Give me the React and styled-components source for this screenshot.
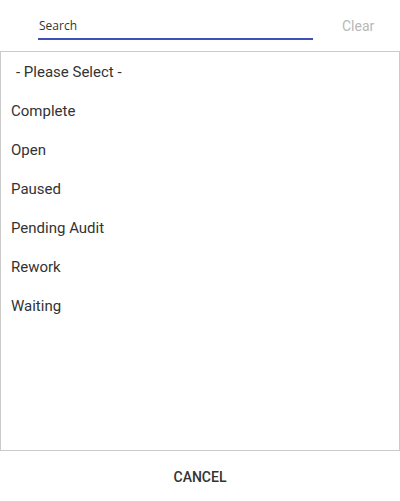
import React from 'react';
import styled, { createGlobalStyle } from 'styled-components';

const GlobalStyle = createGlobalStyle`
body {
  margin: 0;
  background: #fff;
  font-family: Roboto, 'Liberation Sans', sans-serif;
}`;

const options = ['Complete', 'Open', 'Paused', 'Pending Audit', 'Rework', 'Waiting'];

const Panel = styled.div`
width: 400px;
height: 501px;
display: flex;
flex-direction: column;`;

const SearchBar = styled.div`
height: 51px;
display: flex;
align-items: flex-start;
padding-left: 38px;
box-sizing: border-box;`;

const SearchField = styled.div`
width: 275px;
height: 40px;
box-sizing: border-box;
border-bottom: 2px solid #3f51b5;
display: flex;
align-items: flex-end;
padding: 0 0 4px 1px;`;

const SearchInput = styled.input`
border: none;
outline: none;
padding: 0;
width: 100%;
font-family: 'Open Sans', 'Noto Sans', sans-serif;
font-size: 12px;
color: #333;
&::placeholder {
  color: #333;
}`;

const ClearButton = styled.button`
margin: 18px 0 0 29px;
border: none;
background: none;
padding: 0;
font-family: Roboto, sans-serif;
font-size: 14px;
color: #b8b8b8;
cursor: pointer;`;

const List = styled.ul`
list-style: none;
margin: 0;
padding: 1px 0 0;
height: 400px;
box-sizing: border-box;
border: 1px solid #cbcbcb;`;

const Item = styled.li`
height: 39px;
line-height: 39px;
padding-left: ${p => (p.placeholder ? '15px' : '10px')};
font-size: 15px;
color: #333;
cursor: pointer;`;

const Footer = styled.div`
flex: 1;
display: flex;
justify-content: center;
align-items: center;
padding-top: 1px;`;

const CancelButton = styled.button`
border: none;
background: none;
font-family: Roboto, sans-serif;
font-size: 14px;
font-weight: 500;
color: #333;
text-transform: uppercase;
cursor: pointer;`;

const App = () => (
  <>
    <GlobalStyle />
    <Panel>
      <SearchBar>
        <SearchField>
          <SearchInput placeholder="Search" />
        </SearchField>
        <ClearButton>Clear</ClearButton>
      </SearchBar>
      <List>
        <Item placeholder>- Please Select -</Item>
        {options.map(o => (
          <Item key={o}>{o}</Item>
        ))}
      </List>
      <Footer>
        <CancelButton>Cancel</CancelButton>
      </Footer>
    </Panel>
  </>
);

export default App;
